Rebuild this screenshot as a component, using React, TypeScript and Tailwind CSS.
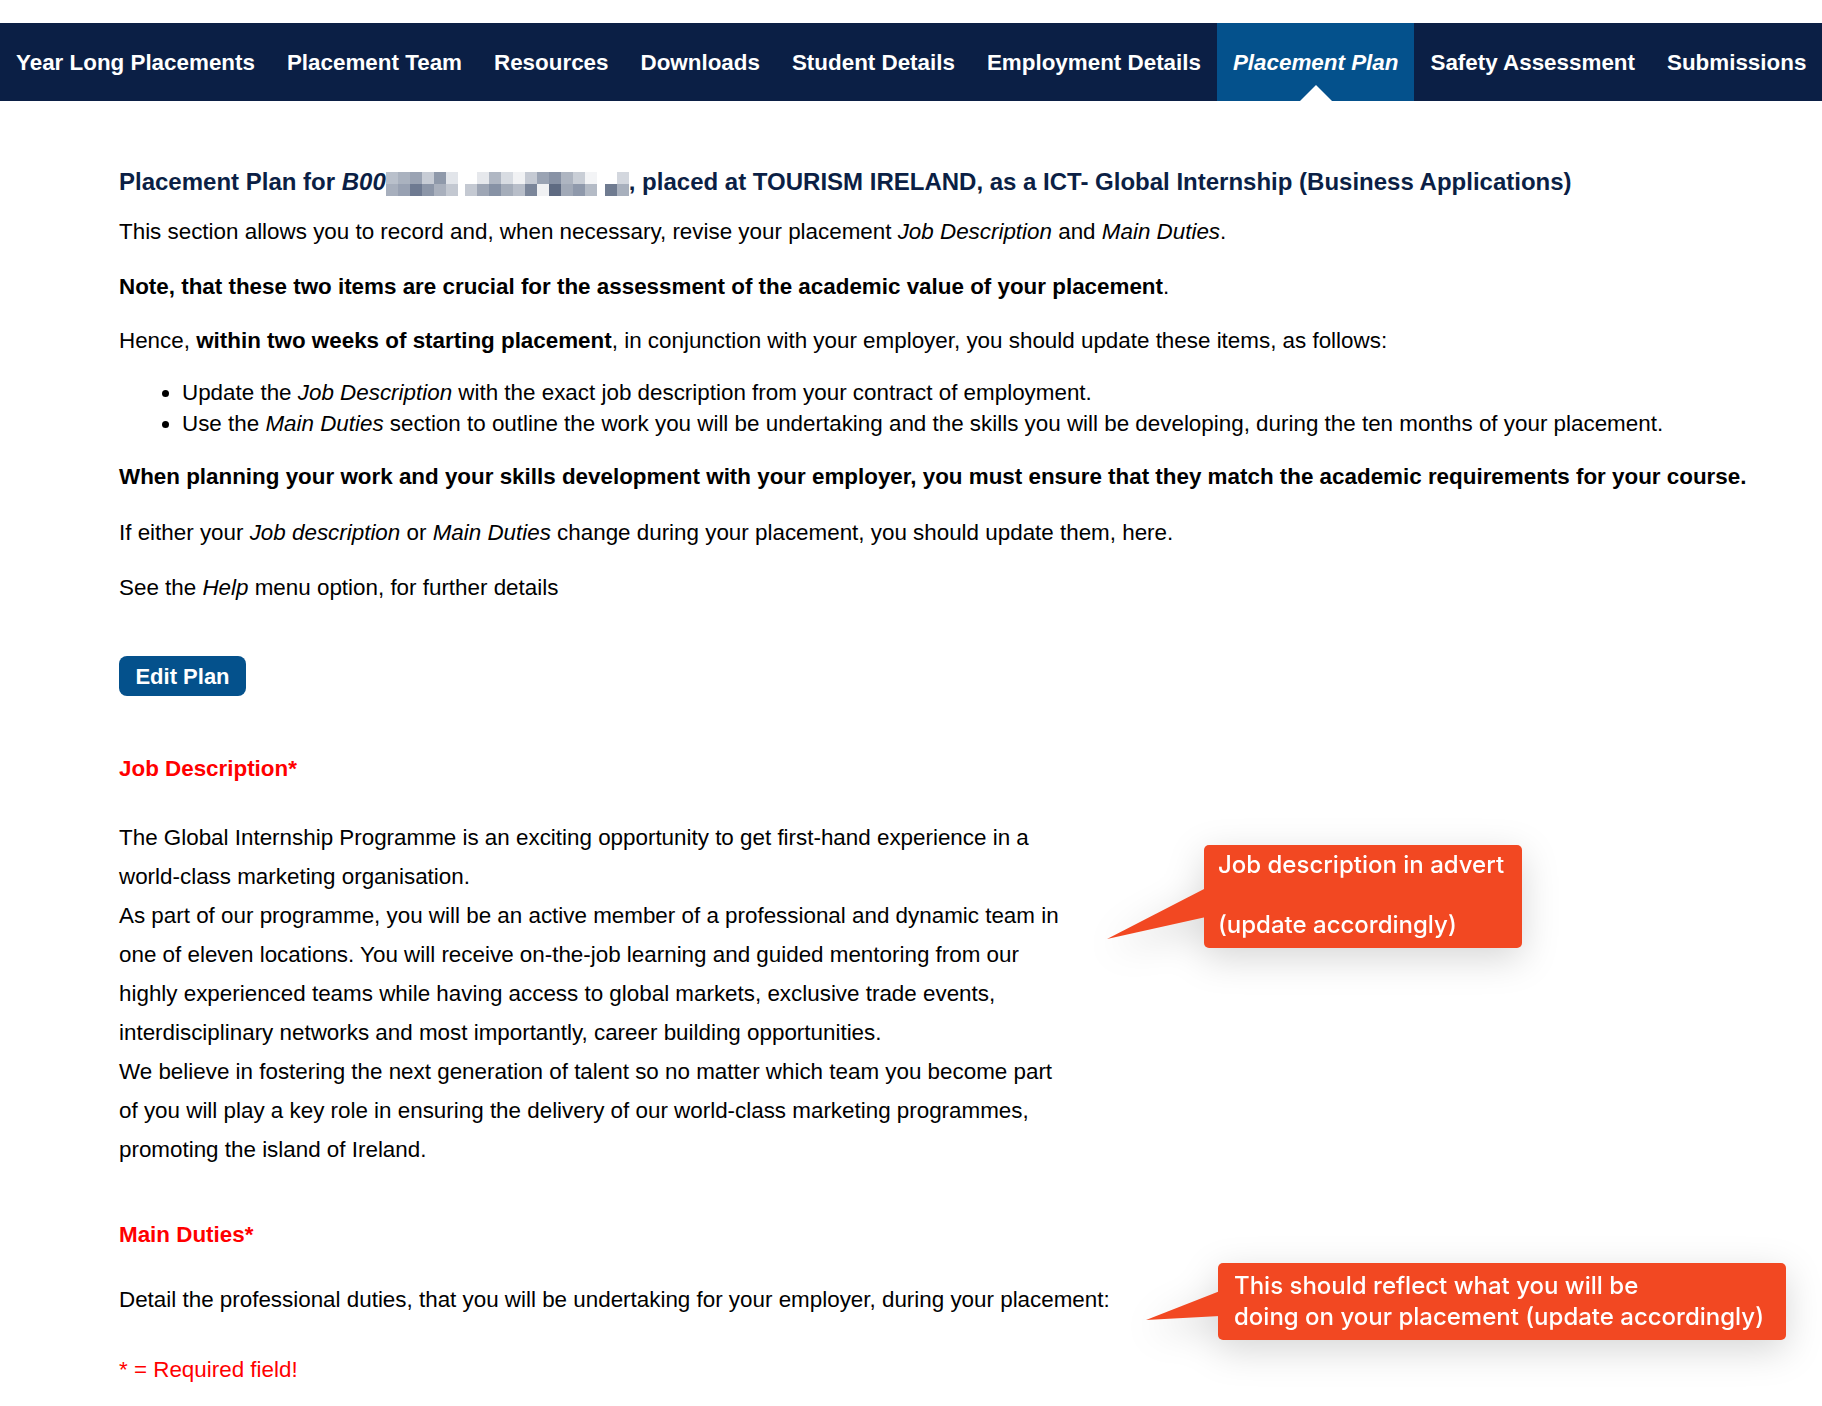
import React from "react";

const navItems = [
  "Year Long Placements",
  "Placement Team",
  "Resources",
  "Downloads",
  "Student Details",
  "Employment Details",
  "Placement Plan",
  "Safety Assessment",
  "Submissions",
];

const mosaicGroups: string[][][] = [
  [
    ["#b9c0cb", "#aab2bf", "#9aa3b3", "#c7ccd5", "#8f99aa", "#e2e5ea"],
    ["#a7afbd", "#98a1b2", "#6e7a91", "#8c96a8", "#a9b0bd", "#c3c8d1"],
  ],
  [
    ["#ffffff", "#e6e8ec", "#b0b7c3", "#d8dce2", "#f1f2f4", "#c5cad3", "#9aa3b3", "#8892a5", "#aeb5c1", "#c9ced6", "#f3f4f6"],
    ["#c4c9d2", "#9ea6b5", "#8792a5", "#a5adba", "#b8bec9", "#7b869a", "#f0f1f3", "#5f6b82", "#a1a9b7", "#8f99ab", "#b4bbc6"],
  ],
  [
    ["#ffffff", "#d3d7de"],
    ["#6f7b90", "#a8b0bd"],
  ],
];

function Mosaic({ rows, className }: { rows: string[][]; className?: string }) {
  return (
    <span className={"inline-flex flex-col align-middle " + (className ?? "")}>
      {rows.map((row, i) => (
        <span key={i} className="flex">
          {row.map((c, j) => (
            <span key={j} className="block w-[12px] h-[12px]" style={{ backgroundColor: c }} />
          ))}
        </span>
      ))}
    </span>
  );
}

export default function App() {
  return (
    <div className="relative min-h-[1406px] w-full bg-white pt-[23px] font-['Liberation_Sans',Arial,Helvetica,sans-serif] text-[22.4px] text-black">
      <nav className="flex h-[78px] bg-[#0b1f45]">
        {navItems.map((item) => {
          const active = item === "Placement Plan";
          return (
            <div
              key={item}
              className={
                active
                  ? "relative flex items-center px-4 pt-[2px] bg-[#04518c] text-white font-bold italic whitespace-nowrap"
                  : "relative flex items-center px-4 pt-[2px] text-white font-bold whitespace-nowrap"
              }
            >
              {item}
              {active && (
                <span className="absolute bottom-0 left-1/2 -translate-x-1/2 w-0 h-0 border-l-[16px] border-r-[16px] border-b-[16px] border-l-transparent border-r-transparent border-b-white" />
              )}
            </div>
          );
        })}
      </nav>

      <main className="pl-[119px] pt-[65px]">
        <h1 className="leading-[31px] text-[24px] font-bold text-[#0b1f45] whitespace-nowrap">
          Placement Plan for <i>B00</i>
          <Mosaic rows={mosaicGroups[0]} />
          <Mosaic rows={mosaicGroups[1]} className="ml-[7px]" />
          <Mosaic rows={mosaicGroups[2]} className="ml-[8px]" />
          , placed at TOURISM IRELAND, as a ICT- Global Internship (Business Applications)
        </h1>

        <p className="mt-[19px] leading-[31px]">
          This section allows you to record and, when necessary, revise your placement <i>Job Description</i> and{" "}
          <i>Main Duties</i>.
        </p>
        <p className="mt-[24px] leading-[31px]">
          <b>Note, that these two items are crucial for the assessment of the academic value of your placement</b>.
        </p>
        <p className="mt-[23px] leading-[31px]">
          Hence, <b>within two weeks of starting placement</b>, in conjunction with your employer, you should update
          these items, as follows:
        </p>
        <ul className="mt-[21px] leading-[31px] list-disc pl-[63px]">
          <li>
            Update the <i>Job Description</i> with the exact job description from your contract of employment.
          </li>
          <li>
            Use the <i>Main Duties</i> section to outline the work you will be undertaking and the skills you will be
            developing, during the ten months of your placement.
          </li>
        </ul>
        <p className="mt-[22px] leading-[31px] font-bold">
          When planning your work and your skills development with your employer, you must ensure that they match the
          academic requirements for your course.
        </p>
        <p className="mt-[25px] leading-[31px]">
          If either your <i>Job description</i> or <i>Main Duties</i> change during your placement, you should update
          them, here.
        </p>
        <p className="mt-[24px] leading-[31px]">
          See the <i>Help</i> menu option, for further details
        </p>

        <div className="mt-[53px]">
          <button className="flex items-center justify-center h-[40px] w-[127px] rounded-[8px] bg-[#04518c] text-white font-bold text-[22px]">
            Edit Plan
          </button>
        </div>

        <h2 className="mt-[57px] leading-[31px] font-bold text-[#ff0000]">Job Description*</h2>

        <div className="mt-[34px] w-[950px] leading-[39px]">
          The Global Internship Programme is an exciting opportunity to get first-hand experience in a world-class
          marketing organisation.
          <br />
          As part of our programme, you will be an active member of a professional and dynamic team in one of eleven
          locations. You will receive on-the-job learning and guided mentoring from our highly experienced teams while
          having access to global markets, exclusive trade events, interdisciplinary networks and most importantly,
          career building opportunities.
          <br />
          We believe in fostering the next generation of talent so no matter which team you become part of you will
          play a key role in ensuring the delivery of our world-class marketing programmes, promoting the island of
          Ireland.
        </div>

        <h2 className="mt-[50px] leading-[31px] font-bold text-[#ff0000]">Main Duties*</h2>
        <p className="mt-[34px] leading-[31px]">
          Detail the professional duties, that you will be undertaking for your employer, during your placement:
        </p>
        <p className="mt-[39px] leading-[31px] text-[#ff0000]">* = Required field!</p>
      </main>

      {/* Callout 1 */}
      <div className="absolute left-[1204px] top-[845px] w-[318px] h-[103px] drop-shadow-[0_10px_18px_rgba(0,0,0,0.16)]">
        <svg className="absolute left-[-98px] top-0" width="100" height="103" viewBox="0 0 100 103">
          <polygon points="100,43 100,72 1,94" fill="#f24822" />
        </svg>
        <div className="relative h-full w-full rounded-[5px] bg-[#f24822] pl-[14px] pt-[5px] font-['Inter',sans-serif] text-[24px] font-medium leading-[30px] text-white whitespace-nowrap">
          <div>Job description in advert</div>
          <div>&nbsp;</div>
          <div>(update accordingly)</div>
        </div>
      </div>

      {/* Callout 2 */}
      <div className="absolute left-[1218px] top-[1263px] w-[568px] h-[77px] drop-shadow-[0_10px_18px_rgba(0,0,0,0.16)]">
        <svg className="absolute left-[-74px] top-0" width="76" height="77" viewBox="0 0 76 77">
          <polygon points="76,28 76,53 2,57" fill="#f24822" />
        </svg>
        <div className="relative h-full w-full rounded-[5px] bg-[#f24822] pl-[16px] pt-[7px] font-['Inter',sans-serif] text-[24px] font-medium leading-[31px] text-white whitespace-nowrap">
          <div>This should reflect what you will be</div>
          <div>doing on your placement (update accordingly)</div>
        </div>
      </div>
    </div>
  );
}
